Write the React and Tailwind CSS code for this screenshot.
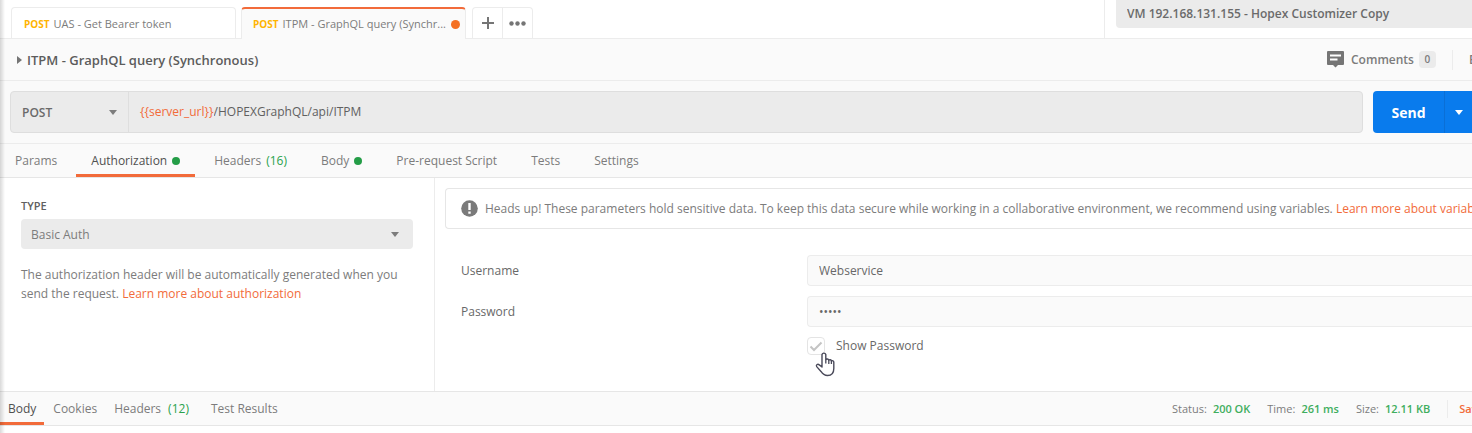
import { useState } from 'react'

const REQUEST_TABS = [
  { key: 'params',   label: 'Params' },
  { key: 'auth',     label: 'Authorization', dot: true },
  { key: 'headers',  label: 'Headers', count: 16 },
  { key: 'body',     label: 'Body', dot: true },
  { key: 'script',   label: 'Pre-request Script' },
  { key: 'tests',    label: 'Tests' },
  { key: 'settings', label: 'Settings' },
]

const RESPONSE_TABS = [
  { key: 'body',    label: 'Body' },
  { key: 'cookies', label: 'Cookies' },
  { key: 'headers', label: 'Headers', count: 12 },
  { key: 'tests',   label: 'Test Results' },
]

const STATS = [
  { label: 'Status:', value: '200 OK' },
  { label: 'Time:',   value: '261 ms' },
  { label: 'Size:',   value: '12.11 KB' },
]

function Caret({ className }) {
  return (
    <svg viewBox="0 0 8 5" className={`w-2 h-[5px] fill-current pointer-events-none ${className}`} aria-hidden="true">
      <path d="M0 0h8L4 5z" />
    </svg>
  )
}

function CommentIcon() {
  return (
    <svg viewBox="0 0 17 17" className="w-[17px] h-[17px] shrink-0" aria-hidden="true">
      <path d="M1 0h15a1 1 0 0 1 1 1v12a1 1 0 0 1-1 1h-5l-2.500 2.500L6 14H1a1 1 0 0 1-1-1V1a1 1 0 0 1 1-1z" fill="#757575" />
      <path d="M3 4.500h11M3 8.500h7.500" stroke="#fff" strokeWidth="2" />
    </svg>
  )
}

function AlertIcon() {
  return (
    <svg viewBox="0 0 17 17" className="w-[17px] h-[17px] shrink-0" aria-hidden="true">
      <circle cx="8.500" cy="8.500" r="8.300" fill="#7a7a7a" />
      <path d="M7.300 3h2.400v7H7.300zM7.300 11.500h2.400v2.300H7.300z" fill="#fff" />
    </svg>
  )
}

function HandCursor() {
  return (
    <svg viewBox="0 0 20 26" className="absolute left-2 top-3.5 w-5 h-[26px] pointer-events-none" aria-hidden="true">
      <path
        d="M7 16V3.500a2 2 0 0 1 3.800 0V8.500c.6-.8 2.600-.7 3 .5.7-.6 2.400-.3 2.600.8.900-.4 2.400 0 2.400 1.400v6.300c0 4-2.200 7-6.300 7-3.200 0-4.800-1.300-6.300-3.800L1.700 15.600c-1-1.800 1.100-3.200 2.600-1.700z"
        fill="#fff" stroke="#4a4a5a" strokeWidth="1.400" strokeLinejoin="round"
      />
      <path d="M10.800 8.500v4M13.800 9v4M16.400 10v3" stroke="#4a4a5a" strokeWidth="1.300" fill="none" />
    </svg>
  )
}

export default function App() {
  const [tab, setTab] = useState('auth')
  const [resTab, setResTab] = useState('body')
  const [path, setPath] = useState('/HOPEXGraphQL/api/ITPM')
  const [user, setUser] = useState('Webservice')
  const [pass, setPass] = useState('admin')

  return (
    <div className="relative w-full min-h-screen overflow-hidden bg-white font-['Open_Sans',sans-serif] text-[12px] leading-[18px] text-[#7c7c7c]">
      {/* Open requests */}
      <header className="flex h-[39px] border-b border-[#ececec]">
        <div className="flex flex-1 min-w-0 items-end pl-[11px]">
          <button className="flex items-center gap-1 w-[225px] h-[31px] pt-0.5 px-3 border border-b-0 border-[#ececec] rounded-t-sm whitespace-nowrap text-[11px]">
            <span className="text-[10px] font-bold text-[#ffb400]">POST</span>
            <span>UAS - Get Bearer token</span>
          </button>
          <button className="flex items-center gap-1 w-[225px] h-8 -mb-px ml-[5px] pl-[11px] pr-[5px] bg-[#fafafa] border-x border-[#ececec] border-t-2 border-t-[#f26b3a] rounded-t-sm whitespace-nowrap text-[11px]">
            <span className="text-[10px] font-bold text-[#ffb400]">POST</span>
            <span>ITPM - GraphQL query (Synchr...</span>
            <span className="w-[9px] h-[9px] ml-auto shrink-0 rounded-full bg-[#f47023]" />
          </button>
          <div className="flex h-[31px] ml-1.5 border border-b-0 border-[#ececec] rounded-t-sm">
            <button aria-label="New tab" className="flex items-center justify-center w-[30px] border-r border-[#ececec]">
              <svg viewBox="0 0 12 12" className="w-3 h-3"><path d="M6 0v12M0 6h12" stroke="#757575" strokeWidth="2" /></svg>
            </button>
            <button aria-label="Tab options" className="flex items-center justify-center w-[29px]">
              <svg viewBox="0 0 17 5" className="w-[17px] h-[5px] fill-[#757575]">
                <circle cx="2.500" cy="2.500" r="2.200" /><circle cx="8.500" cy="2.500" r="2.200" /><circle cx="14.500" cy="2.500" r="2.200" />
              </svg>
            </button>
          </div>
        </div>
        <div className="w-[368px] pl-[11px] border-l border-[#ececec]">
          <select aria-label="Environment" className="appearance-none w-full h-7 px-[11px] bg-[#ebebeb] rounded-bl-sm font-semibold text-[#6a6a6a]">
            <option>VM 192.168.131.155 - Hopex Customizer Copy</option>
          </select>
        </div>
      </header>

      {/* Request name */}
      <div className="flex items-center justify-between h-[42px] pl-4 bg-[#fafafa] border-b border-[#ececec] overflow-hidden">
        <button className="flex items-center gap-[5px] text-[13px] font-semibold text-[#5c5c5c]">
          <svg viewBox="0 0 6 8" className="w-1.5 h-2 fill-[#757575]" aria-hidden="true"><path d="M1 0v8l5-4z" /></svg>
          ITPM - GraphQL query (Synchronous)
        </button>
        <div className="flex items-center w-[145px] shrink-0 overflow-hidden whitespace-nowrap font-semibold">
          <button className="flex items-center shrink-0">
            <CommentIcon />
            <span className="ml-[7px]">Comments</span>
            <span className="ml-[5px] w-[17px] h-[17px] bg-[#ebebeb] rounded-sm text-[10px] leading-[17px]">0</span>
          </button>
          <div className="w-px h-5 mx-4 shrink-0 bg-[#ececec]" />
          <button className="shrink-0">Examples</button>
        </div>
      </div>

      {/* Method and url */}
      <div className="flex gap-[10px] h-[63px] py-[10px] pl-[10px] bg-[#fafafa] border-b border-[#ececec]">
        <div className="flex flex-1 min-w-0 h-[42px] bg-[#ebebeb] border border-[#dedede] rounded-sm">
          <div className="relative w-[118px] border-r border-[#dedede]">
            <select aria-label="Method" className="appearance-none w-full h-full pl-[11px] pt-0.5 font-semibold text-[#6a6a6a]">
              <option>POST</option>
              <option>GET</option>
            </select>
            <Caret className="absolute right-[11px] top-[18px]" />
          </div>
          <label className="flex flex-1 items-center pl-[11px] text-[#606060]">
            <span className="text-[#f26b3a]">{'{{server_url}}'}</span>
            <input aria-label="Request URL" className="flex-1 outline-none" value={path} onChange={e => setPath(e.target.value)} />
          </label>
        </div>
        <div className="flex w-[99px] h-[42px] bg-[#097bed] rounded-l-sm text-white">
          <button className="w-[71px] pt-0.5 text-[14px] font-bold">Send</button>
          <button aria-label="Send options" className="flex flex-1 items-center justify-center border-l border-[#0a6fd6]">
            <Caret className="" />
          </button>
        </div>
      </div>

      <nav className="flex gap-1 h-[34px] bg-[#fafafa] border-b border-[#e6e6e6] whitespace-nowrap">
        {REQUEST_TABS.map(t => (
          <button key={t.key} onClick={() => setTab(t.key)}
            className={`flex items-center gap-[5px] px-[15px] border-y-[3px] border-t-transparent ${tab === t.key ? 'border-b-[#f26b3a] text-[#505050]' : 'border-b-transparent'}`}>
            {t.label}
            {t.count && <span className="text-[#2ba24c]">({t.count})</span>}
            {t.dot && <span className="w-2 h-2 rounded-full bg-[#249d47]" />}
          </button>
        ))}
      </nav>

      <main className="flex h-[213px]">
        <section className="w-[435px] shrink-0 px-[21px] pt-[19px] border-r border-[#ececec]">
          <label htmlFor="auth-type" className="block text-[11px] font-semibold text-[#606060]">TYPE</label>
          <div className="relative mt-1">
            <select id="auth-type" className="appearance-none w-full h-[30px] pt-px px-[10px] bg-[#ebebeb] rounded-sm">
              <option>Basic Auth</option>
            </select>
            <Caret className="absolute right-[14px] top-[13px]" />
          </div>
          <p className="mt-4 leading-[19px]">
            The authorization header will be automatically generated when you send the request. <a href="#auth" className="text-[#f26b3a]">Learn more about authorization</a>
          </p>
        </section>

        <section className="flex-1 min-w-0 pl-[10px] pt-[10px]">
          <div className="flex items-center gap-[7px] h-[41px] pl-[15px] border border-r-0 border-[#e6e6e6] rounded-l-sm whitespace-nowrap overflow-hidden">
            <AlertIcon />
            <p>
              Heads up! These parameters hold sensitive data. To keep this data secure while working in a collaborative environment, we recommend using variables. <a href="#variables" className="text-[#f26b3a]">Learn more about variables</a>
            </p>
          </div>
          <div className="grid grid-cols-[346px_1fr] gap-y-[10px] pl-4 pt-[26px] items-center text-[#686868]">
            <label htmlFor="username">Username</label>
            <input id="username" className="h-[31px] px-[11px] bg-[#fafafa] border border-r-0 border-[#ececec] rounded-l-sm outline-none" value={user} onChange={e => setUser(e.target.value)} />
            <label htmlFor="password">Password</label>
            <input id="password" type="password" className="h-[31px] px-[11px] bg-[#fafafa] border border-r-0 border-[#ececec] rounded-l-sm outline-none" value={pass} onChange={e => setPass(e.target.value)} />
            <div className="relative col-start-2 flex items-center">
              <input id="show" type="checkbox" className="appearance-none w-[18px] h-[18px] border border-[#e4e4e4] rounded-sm" />
              <svg viewBox="0 0 18 18" className="absolute left-0 w-[18px] h-[18px] pointer-events-none" aria-hidden="true">
                <path d="M3.500 9.500l3.500 3.500L14.500 5.500" stroke="#c4c4c4" strokeWidth="2" fill="none" />
              </svg>
              <label htmlFor="show" className="pl-[11px]">Show Password</label>
              <HandCursor />
            </div>
          </div>
        </section>
      </main>

      {/* Response */}
      <footer className="flex justify-between h-[35px] bg-[#fafafa] border-y border-[#e6e6e6] whitespace-nowrap overflow-hidden">
        <nav className="flex gap-px">
          {RESPONSE_TABS.map(t => (
            <button key={t.key} onClick={() => setResTab(t.key)}
              className={`flex items-center gap-[7px] px-2 border-y-[3px] border-t-transparent ${resTab === t.key ? 'border-b-[#f26b3a] text-[#505050]' : 'border-b-transparent'}`}>
              {t.label}
              {t.count && <span className="mr-[5px] text-[#2ba24c]">({t.count})</span>}
            </button>
          ))}
        </nav>
        <div className="flex items-center w-[300px] gap-[17px] text-[11px]">
          {STATS.map(s => (
            <span key={s.label} className="flex gap-1.5 shrink-0">
              {s.label} <span className="font-semibold text-[#3fae5e]">{s.value}</span>
            </span>
          ))}
          <button className="pl-[11px] border-l border-[#ececec] shrink-0 font-semibold text-[#f26b3a]">Save Response</button>
        </div>
      </footer>

      <div className="absolute inset-y-0 left-0 w-[5px] bg-linear-to-r from-black/15 to-transparent pointer-events-none" />
    </div>
  )
}
